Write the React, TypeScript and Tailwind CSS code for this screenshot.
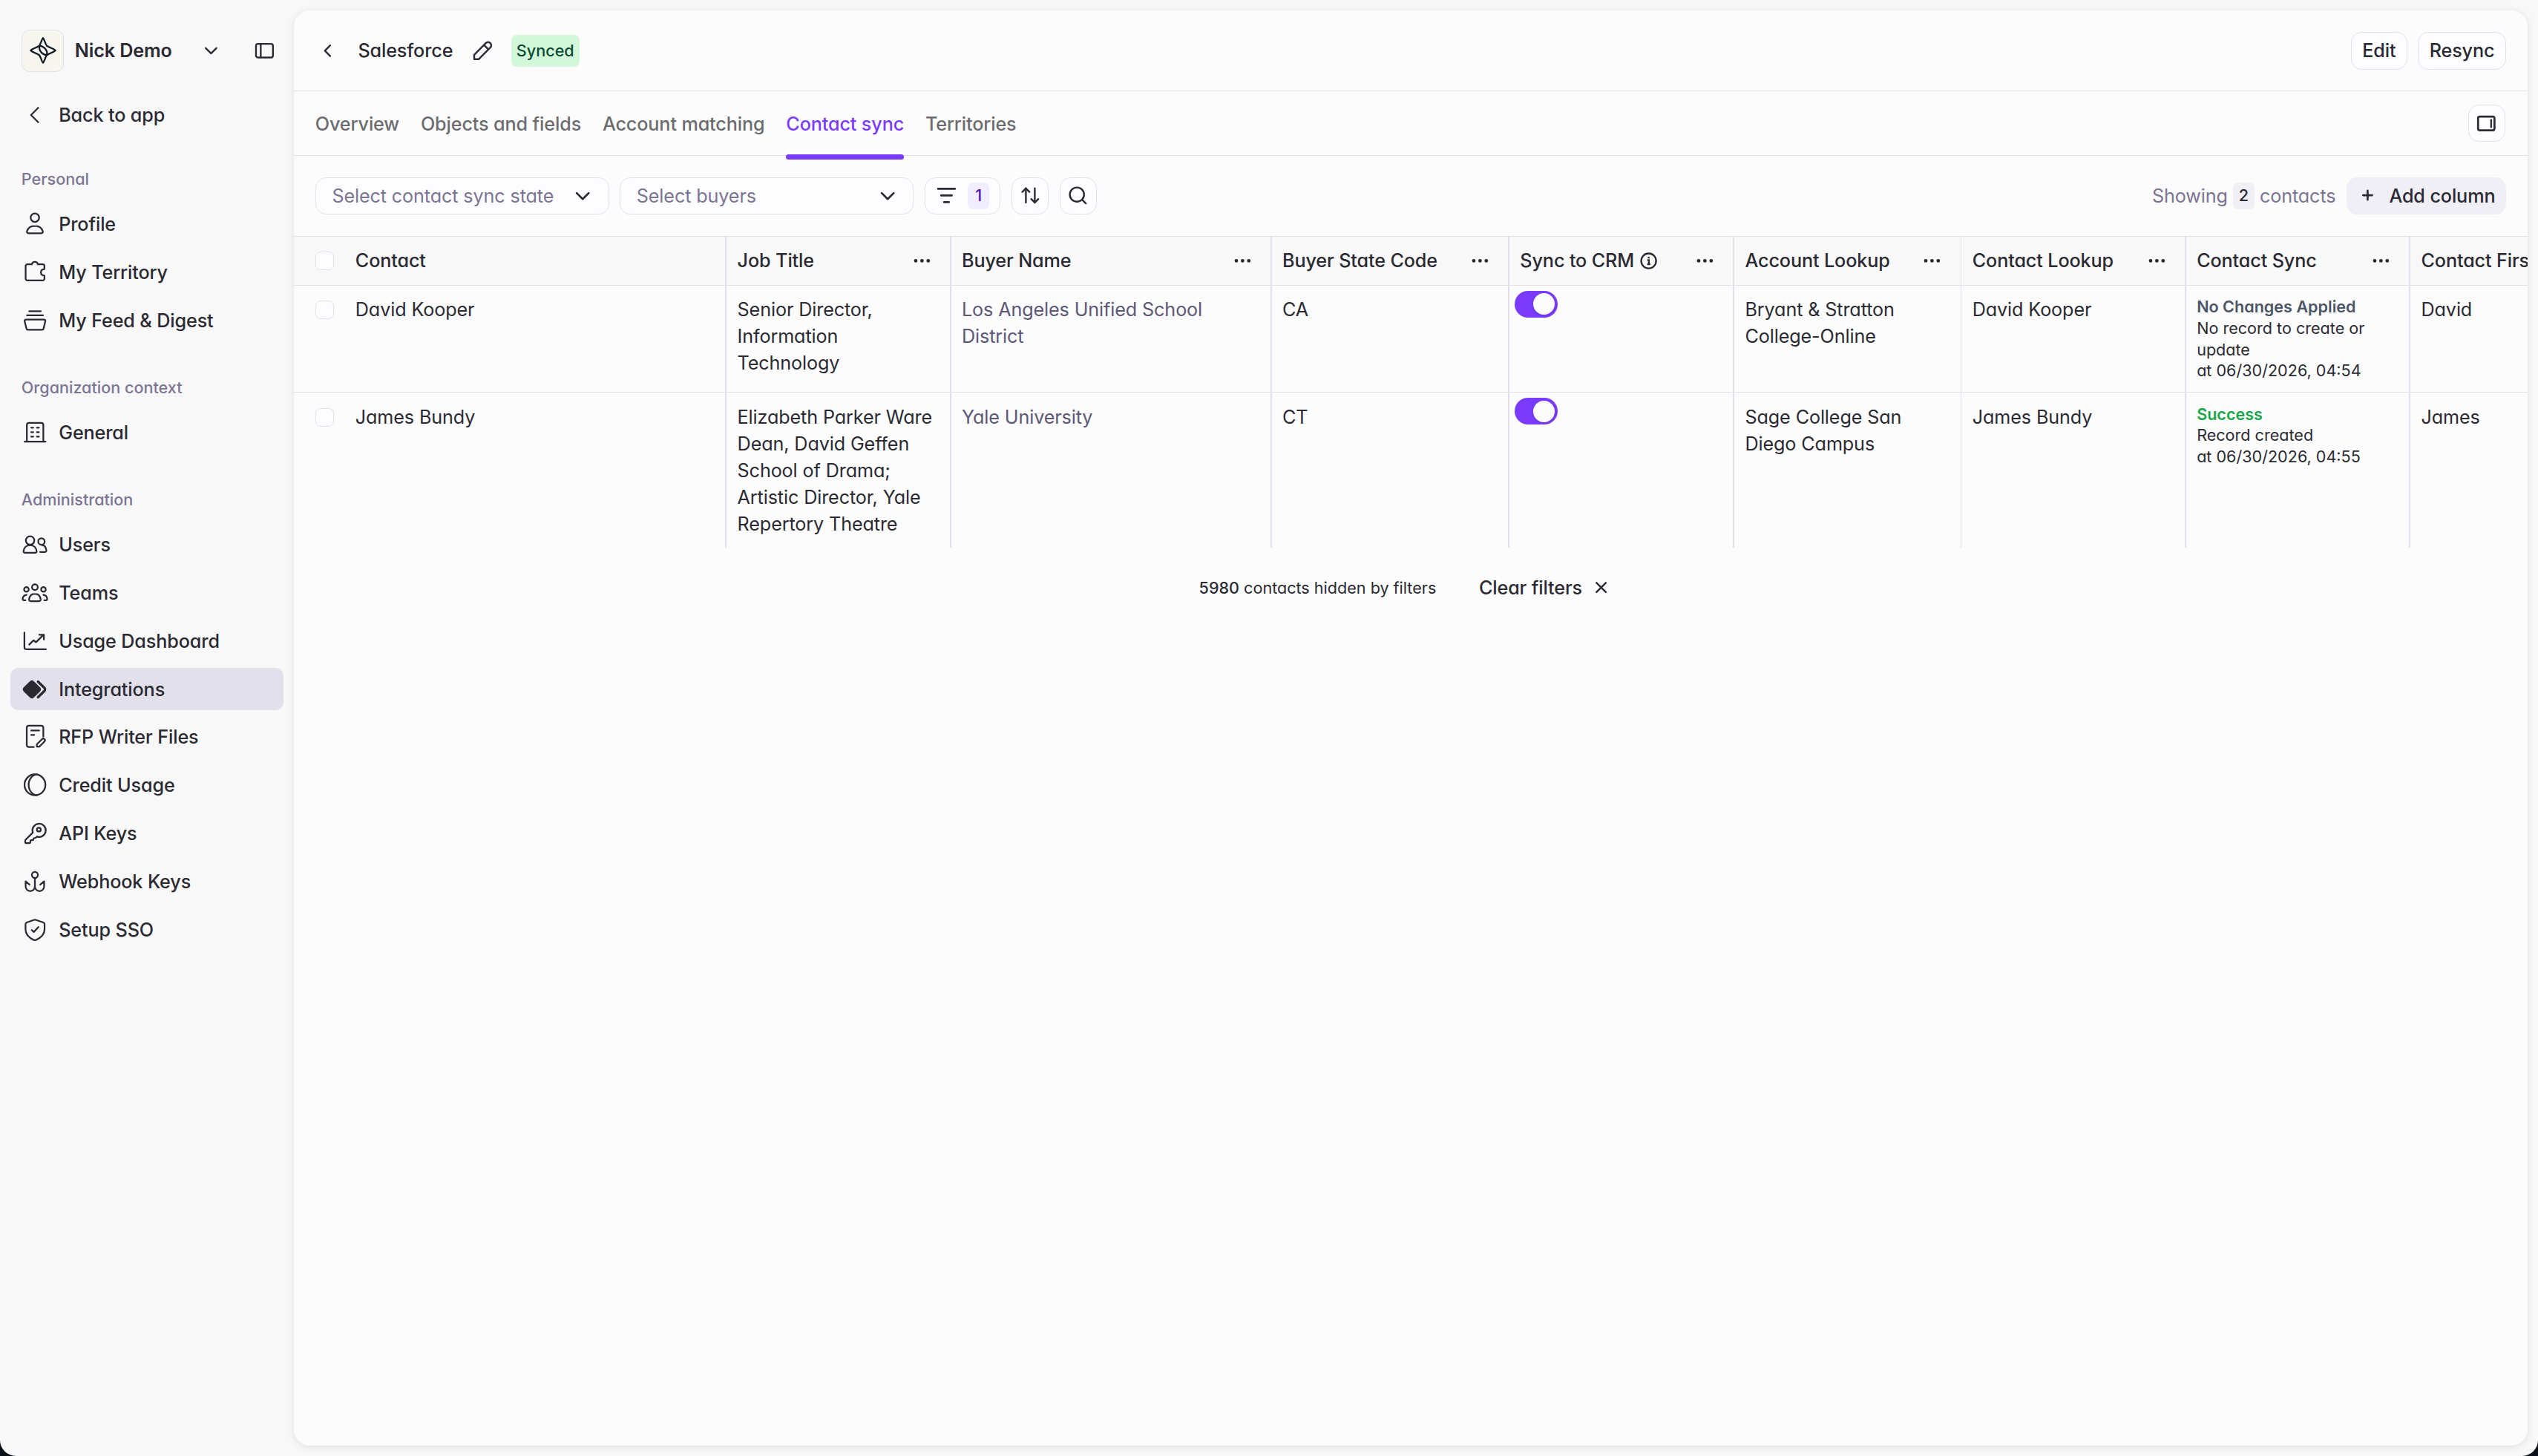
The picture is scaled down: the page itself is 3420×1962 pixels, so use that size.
import { ReactNode } from "react";
import { ArrowUpDown, ChevronDown, ChevronLeft, Ellipsis, Search, X } from "lucide-react";
import clsx from "clsx";

type IconProps = { children: ReactNode };

const NavIcon = ({ children }: IconProps) => (
  <svg
    viewBox="0 0 24 24"
    className="size-5 shrink-0"
    fill="none"
    stroke="currentColor"
    strokeWidth={1.5}
    strokeLinecap="round"
    strokeLinejoin="round"
  >
    {children}
  </svg>
);

const icons: Record<string, ReactNode> = {
  back: <path d="M15 5.5 8.5 12l6.5 6.5" />,
  profile: (
    <>
      <circle cx="12" cy="6.2" r="3.8" />
      <path d="M12 13.6c-3.5 0-6.2 2-7.1 4.8-.35 1.1.4 1.8 1.3 1.8h11.6c.9 0 1.65-.7 1.3-1.8-.9-2.8-3.6-4.8-7.1-4.8Z" />
    </>
  ),
  territory: (
    <path d="M9.3 4.8a2.75 2.75 0 0 1 5.4 0h4.3a1.6 1.6 0 0 1 1.6 1.6v2.7c-2 .1-3.2 1.3-3.2 2.9s1.2 2.8 3.2 2.9v2.8a1.6 1.6 0 0 1-1.6 1.6H5.3a1.6 1.6 0 0 1-1.6-1.6V6.4a1.6 1.6 0 0 1 1.6-1.6Z" />
  ),
  feed: (
    <path d="M6.9 3.6h10.4M4.9 7.3h14.4M4 11h16.2c.8 0 1.4.7 1.2 1.5l-1.6 6.7c-.15.7-.7 1.1-1.4 1.1H5.8c-.7 0-1.25-.4-1.4-1.1l-1.6-6.7C2.6 11.7 3.2 11 4 11Z" />
  ),
  general: (
    <>
      <path d="M2.8 20.1h18.7M4.8 20V5a1.8 1.8 0 0 1 1.8-1.8h11.2A1.8 1.8 0 0 1 19.6 5v15" />
      <path d="M8.7 7.5h1.8M13.8 7.5h1.8M8.7 11.6h1.8M13.8 11.6h1.8M8.7 15.6h1.8M13.8 15.6h1.8" />
    </>
  ),
  users: (
    <>
      <circle cx="7.7" cy="8.2" r="3.8" />
      <path d="M7.7 12.4c-3.2 0-5.5 2.1-5.9 5.5-.1.8.4 1.3 1.2 1.3h9.4c.8 0 1.3-.5 1.2-1.3-.4-3.4-2.7-5.5-5.9-5.5Z" />
      <circle cx="17.9" cy="9.1" r="2.9" />
      <path d="M18.3 12.2c2.3.2 3.7 2.1 4 4.8.1.9-.3 1.5-1.2 1.5h-4.4" />
    </>
  ),
  teams: (
    <>
      <circle cx="12" cy="6.8" r="2.6" />
      <circle cx="4.4" cy="8.8" r="2.1" />
      <circle cx="19.7" cy="8.8" r="2.1" />
      <path d="M12 12.7c-2.9 0-4.7 1.9-5.2 4.9-.15 1.1.4 1.8 1.4 1.8h7.6c1 0 1.55-.7 1.4-1.8-.5-3-2.3-4.9-5.2-4.9ZM4.5 13.8c-1.9.2-3.2 1.5-3.5 3.5-.1.7.4 1.2 1.1 1.2h1.5M19.6 13.8c1.9.2 3.2 1.5 3.5 3.5.1.7-.4 1.2-1.1 1.2h-1.5" />
    </>
  ),
  usage: (
    <path d="M2.6 4.2v13.3c0 1 .8 1.8 1.8 1.8h17.5M6.9 15.1l3.5-3.5c.3-.3.7-.3 1 0l1 1c.3.3.7.3 1 0l6.2-6.2M15.9 6.3h4.2v4.2" />
  ),
  integrations: (
    <>
      <path
        d="M7.9 5.3a2 2 0 0 1 2.8 0l5.3 5.3a2 2 0 0 1 0 2.8l-5.3 5.3a2 2 0 0 1-2.8 0l-5.3-5.3a2 2 0 0 1 0-2.8Z"
        fill="currentColor"
      />
      <path d="m14.8 5 5.800 5.700a1.800 1.800 0 0 1 0 2.600l-5.800 5.700" strokeWidth={2.2} />
    </>
  ),
  rfp: (
    <>
      <path d="M11 21.1H6.5a1.8 1.8 0 0 1-1.8-1.8V3.7a1.8 1.8 0 0 1 1.8-1.8h11.3a1.8 1.8 0 0 1 1.8 1.8v8M8.7 6.3h7.1M8.7 10.3h2.7" />
      <path d="M13.8 18.7v2.1H16l4.6-4.6a1.52 1.52 0 0 0-2.15-2.15Z" />
    </>
  ),
  credit: (
    <>
      <circle cx="12.1" cy="11.7" r="9.4" />
      <path d="M14 2.4c-4.2 0-7.6 4.2-7.6 9.3s3.4 9.3 7.6 9.3" />
    </>
  ),
  apiKeys: (
    <g transform="translate(1.5 1.5) scale(.92)" strokeWidth={1.63}>
      <path d="M2.586 17.414A2 2 0 0 0 2 18.828V20a1 1 0 0 0 1 1h3a1 1 0 0 0 1-1v-1a1 1 0 0 1 1-1h1a1 1 0 0 0 1-1 1 1 0 0 1 1-1h.172a2 2 0 0 0 1.414-.586l.814-.814a6.5 6.5 0 1 0-4-4z" />
      <circle cx="15.3" cy="7.7" r="1.9" />
    </g>
  ),
  webhook: (
    <>
      <circle cx="12" cy="6" r="2.7" />
      <path d="M12 8.7V16.4a4.15 4.15 0 0 1-8.3 0v-4.7l3.5 3M12 16.4a4.15 4.15 0 0 0 8.3 0v-4.7l-3.5 3" />
    </>
  ),
  sso: (
    <path d="M11.4 3a1.8 1.8 0 0 1 1.3 0l6.8 2.3a1.8 1.8 0 0 1 1.2 1.7v4.6c0 4.7-3.3 7.4-7.8 9.500-.6.3-1.2.3-1.8 0-4.500-2.100-7.500-4.800-7.500-9.500V7a1.800 1.800 0 0 1 1.200-1.700ZM9.200 12.200l1.800 1.700 4.200-4.400" />
  ),
};

const sections = [
  {
    title: "Personal",
    items: [
      { label: "Profile", icon: "profile" },
      { label: "My Territory", icon: "territory" },
      { label: "My Feed & Digest", icon: "feed" },
    ],
  },
  {
    title: "Organization context",
    items: [{ label: "General", icon: "general" }],
  },
  {
    title: "Administration",
    items: [
      { label: "Users", icon: "users" },
      { label: "Teams", icon: "teams" },
      { label: "Usage Dashboard", icon: "usage" },
      { label: "Integrations", icon: "integrations" },
      { label: "RFP Writer Files", icon: "rfp" },
      { label: "Credit Usage", icon: "credit" },
      { label: "API Keys", icon: "apiKeys" },
      { label: "Webhook Keys", icon: "webhook" },
      { label: "Setup SSO", icon: "sso" },
    ],
  },
];

const tabs = ["Overview", "Objects and fields", "Account matching", "Contact sync", "Territories"];
const activeTab = "Contact sync";

const columns = [
  { title: "Job Title", width: "w-[168px]" },
  { title: "Buyer Name", width: "w-[240px]" },
  { title: "Buyer State Code", width: "w-[178px]" },
  { title: "Sync to CRM", width: "w-[168.4px]", info: true },
  { title: "Account Lookup", width: "w-[170.15px]" },
  { title: "Contact Lookup", width: "w-[168px]" },
  { title: "Contact Sync", width: "w-[168px]" },
  { title: "Contact First Name", width: "w-[168px]" },
];

const contacts = [
  {
    name: "David Kooper",
    jobTitle: "Senior Director, Information Technology",
    buyer: "Los Angeles Unified School District",
    state: "CA",
    account: "Bryant & Stratton College-Online",
    status: "No Changes Applied",
    statusClass: "text-[#4b5565]",
    message: "No record to create or update",
    at: "at 06/30/2026, 04:54",
    firstName: "David",
  },
  {
    name: "James Bundy",
    jobTitle:
      "Elizabeth Parker Ware Dean, David Geffen School of Drama; Artistic Director, Yale Repertory Theatre",
    buyer: "Yale University",
    state: "CT",
    account: "Sage College San Diego Campus",
    status: "Success",
    statusClass: "text-[#1aa64a]",
    message: "Record created",
    at: "at 06/30/2026, 04:55",
    firstName: "James",
  },
];

const NavItem = ({ label, icon }: { label: string; icon: string }) => (
  <div
    className={clsx(
      "flex h-8 items-center gap-2 rounded-md px-2 font-medium",
      label === "Integrations" && "bg-[#e2e0ea]"
    )}
  >
    <NavIcon>{icons[icon]}</NavIcon>
    {label}
  </div>
);

const Sidebar = () => (
  <div className="flex w-[220px] shrink-0 flex-col px-2 pt-[22px]">
    <div className="mb-4 flex h-8 items-center pl-2">
      <div className="flex size-8 items-center justify-center rounded-md border border-[#e2e0ea] bg-[#f6f6ee]">
        <svg viewBox="0 0 24 24" className="size-5" fill="none" stroke="#111827" strokeWidth={1.5} strokeLinejoin="round">
          <path d="M12 .8c.5 0 2.3 5.5 3.3 6.9 1.3 1.2 7.9 3.5 7.9 4.3s-6.6 3.1-7.9 4.3c-1 1.4-2.8 6.9-3.3 6.9s-2.3-5.5-3.3-6.9C7.4 15.1.8 12.8.8 12s6.6-3.1 7.9-4.3C9.7 6.3 11.5.8 12 .8Z" />
          <path d="M8.7 7.7c3.8.2 7.3 3.6 7 8.3-4.2.2-7.6-3.6-7-8.3Z" />
        </svg>
      </div>
      <p className="ml-2 flex-1 font-semibold">Nick Demo</p>
      <ChevronDown className="mr-6 size-4" />
      <svg viewBox="0 0 16 16" className="mr-1.5 size-4" fill="none" stroke="currentColor" strokeWidth={1.3}>
        <rect x="1.65" y="2.85" width="12.7" height="10.2" rx="1.4" />
        <path d="M5.2 3v10" />
      </svg>
    </div>
    <NavItem label="Back to app" icon="back" />
    {sections.map((section, i) => (
      <div key={section.title} className={i === 0 ? "mt-6" : "mt-[26px]"}>
        <p className="mb-2.5 pl-2 text-xs leading-4 font-medium tracking-normal text-[#7b7593]">
          {section.title}
        </p>
        <div className="flex flex-col gap-1">
          {section.items.map((item) => (
            <NavItem key={item.label} {...item} />
          ))}
        </div>
      </div>
    ))}
  </div>
);

const boxClass = "flex h-7 items-center rounded-lg border border-[#e2e0ea] bg-[#fdfdff]";

const Select = ({ placeholder }: { placeholder: string }) => (
  <div className={clsx(boxClass, "w-[220px] justify-between pr-2.5 pl-3 text-[#7b7593]")}>
    {placeholder}
    <ChevronDown className="size-[18px] text-[#2b2a33]" />
  </div>
);

const Checkbox = () => <div className="size-3.5 shrink-0 rounded border border-[#e2e0ea] bg-[#fdfdff]" />;

const Divider = () => <div className="w-px shrink-0 bg-[#e2e0ea]" />;

const Toggle = () => (
  <div className="m-1 flex h-5 w-8 justify-end rounded-full bg-[#7a3bff] p-0.5">
    <div className="size-4 rounded-full bg-[#fcfcfc] shadow" />
  </div>
);

const Cell = ({ width, children, className }: { width: string; children: ReactNode; className?: string }) => (
  <div className={clsx("flex shrink-0", width)}>
    <div className={clsx("flex-1", className ?? "py-2 pr-[7px] pl-2")}>{children}</div>
    <Divider />
  </div>
);

const TableHeader = () => (
  <div className="flex h-[36.5px] border-b border-[#e2e0ea] bg-[#f8f8f8] font-medium">
    <div className="flex w-[324px] shrink-0">
      <div className="flex flex-1 items-center gap-4 pl-4">
        <Checkbox />
        Contact
      </div>
      <Divider />
    </div>
    {columns.map((column) => (
      <div key={column.title} className={clsx("flex shrink-0", column.width)}>
        <div className="flex flex-1 items-center pr-[13px] pl-2 whitespace-nowrap">
          {column.title}
          {column.info && (
            <svg viewBox="0 0 14 14" className="ml-1 size-3.5" fill="none" stroke="currentColor" strokeWidth={1.3}>
              <circle cx="7" cy="7" r="5.6" />
              <path d="M6 6.4h1.15v3M5.9 9.5h2.4" />
              <circle cx="7" cy="4.5" r=".75" fill="currentColor" stroke="none" />
            </svg>
          )}
          <Ellipsis className="ml-auto size-4 shrink-0" />
        </div>
        <Divider />
      </div>
    ))}
  </div>
);

const App = () => {
  return (
    <div className="h-[1962px] w-[3420px] overflow-hidden bg-[#0b1118]">
      <div className="flex h-[1090px] w-[1900px] overflow-hidden rounded-b-xl bg-[#f8f8f8] font-[Inter,sans-serif] text-sm leading-5 tracking-[-0.005em] text-[#2b2a33] antialiased [font-feature-settings:'cv11'] [zoom:1.8]">
        <Sidebar />
        <div className="my-2 mr-2 flex min-w-0 flex-1 flex-col overflow-hidden rounded-xl bg-[#fcfcfc] shadow-[0_1px_6px_rgba(0,0,0,0.1)]">
          <div className="flex h-[60.5px] shrink-0 items-center border-b border-[#e2e0ea] pr-4 pl-[17px]">
            <ChevronLeft className="size-4" />
            <p className="ml-[15px] font-medium">Salesforce</p>
            <svg
              viewBox="0 0 24 24"
              className="ml-3.5 size-4"
              fill="none"
              stroke="currentColor"
              strokeWidth={2}
              strokeLinejoin="round"
            >
              <path d="M2.5 21.5v-5L15.7 3.3a3.3 3.3 0 0 1 4.7 0l.3.3a3.3 3.3 0 0 1 0 4.7L7.5 21.5ZM13.5 5.5l5 5" />
            </svg>
            <div className="ml-[13.5px] rounded bg-[#d3f7d9] px-1 py-1 text-xs leading-4 font-medium tracking-normal text-[#0b4a33]">
              Synced
            </div>
            <div className="ml-auto flex gap-2 font-medium">
              <div className={clsx(boxClass, "px-2")}>Edit</div>
              <div className={clsx(boxClass, "px-2")}>Resync</div>
            </div>
          </div>

          <div className="flex h-[48.1px] shrink-0 items-center border-b border-[#e2e0ea] px-4">
            <div className="flex h-full gap-4 font-medium text-[#6c6c70]">
              {tabs.map((tab) => (
                <div
                  key={tab}
                  className={clsx("relative flex items-center pt-px", tab === activeTab && "text-[#7a3bff]")}
                >
                  {tab}
                  {tab === activeTab && (
                    <div className="absolute inset-x-0 -bottom-[3.5px] h-1 rounded-xs bg-[#7a3bff]" />
                  )}
                </div>
              ))}
            </div>
            <div className={clsx(boxClass, "mr-[0.5px] ml-auto w-7 justify-center")}>
              <svg viewBox="0 0 16 16" className="size-4" fill="none" stroke="currentColor" strokeWidth={1.5}>
                <rect x="1.8" y="2.9" width="12.3" height="10.2" rx="1.3" />
                <path d="M11.6 5.3v5.4" strokeLinecap="round" strokeWidth={1.3} />
              </svg>
            </div>
          </div>

          <div className="flex h-[60px] shrink-0 items-center gap-2 px-4">
            <Select placeholder="Select contact sync state" />
            <Select placeholder="Select buyers" />
            <div className={clsx(boxClass, "gap-2 px-2")}>
              <svg viewBox="0 0 16 16" className="size-4" fill="none" stroke="currentColor" strokeWidth={1.5} strokeLinecap="round">
                <path d="M1.7 3h12.6M4 8h8M6.2 13h3.6" />
              </svg>
              <div className="flex h-5 w-4 items-center justify-center rounded bg-[#f0edff] text-xs font-medium text-[#5415b8]">
                1
              </div>
            </div>
            <div className={clsx(boxClass, "w-7 justify-center")}>
              <ArrowUpDown className="size-4" />
            </div>
            <div className={clsx(boxClass, "w-7 justify-center")}>
              <Search className="size-4" />
            </div>
            <div className="ml-auto flex items-center gap-1 text-[#7b7593]">
              Showing
              <div className="flex h-5 w-4 items-center justify-center rounded bg-[#f0eff5] text-xs font-medium text-[#2b2a33]">
                2
              </div>
              contacts
            </div>
            <div className="flex h-7 items-center gap-2 rounded-lg bg-[#f0eff5] px-2 font-medium">
              <svg viewBox="0 0 16 16" className="size-4" fill="none" stroke="currentColor" strokeWidth={1.5} strokeLinecap="round">
                <path d="M8 4.4v6.8M4.6 7.8h6.8" />
              </svg>
              Add column
            </div>
          </div>

          <div className="shrink-0 overflow-hidden border-t border-[#e2e0ea]">
            <TableHeader />
            {contacts.map((contact, i) => (
              <div key={contact.name} className={clsx("flex", i === 0 && "h-[80.4px] border-b border-[#e2e0ea]")}>
                <div className="flex w-[324px] shrink-0">
                  <div className="flex flex-1 items-start gap-4 py-2 pl-4">
                    <div className="pt-[3.5px]">
                      <Checkbox />
                    </div>
                    {contact.name}
                  </div>
                  <Divider />
                </div>
                <Cell width="w-[168px]">{contact.jobTitle}</Cell>
                <Cell width="w-[240px]">
                  <span className="text-[#5d5778]">{contact.buyer}</span>
                </Cell>
                <Cell width="w-[178px]">{contact.state}</Cell>
                <Cell width="w-[168.4px]" className="p-0">
                  <Toggle />
                </Cell>
                <Cell width="w-[170.15px]">{contact.account}</Cell>
                <Cell width="w-[168px]">{contact.name}</Cell>
                <Cell width="w-[168px]">
                  <div className="text-xs leading-4 tracking-normal">
                    <p className={clsx("font-semibold", contact.statusClass)}>{contact.status}</p>
                    <p>{contact.message}</p>
                    <p>{contact.at}</p>
                  </div>
                </Cell>
                <Cell width="w-[168px]">{contact.firstName}</Cell>
              </div>
            ))}
          </div>

          <div className="flex items-center justify-center gap-6 py-4">
            <p className="text-xs tracking-normal">
              <span className="font-medium">5980</span> contacts hidden by filters
            </p>
            <div className="flex h-7 items-center gap-[7px] px-2 font-medium">
              Clear filters
              <X className="mr-px size-3.5" strokeWidth={2.3} />
            </div>
          </div>
        </div>
      </div>
    </div>
  );
};

export default App;
